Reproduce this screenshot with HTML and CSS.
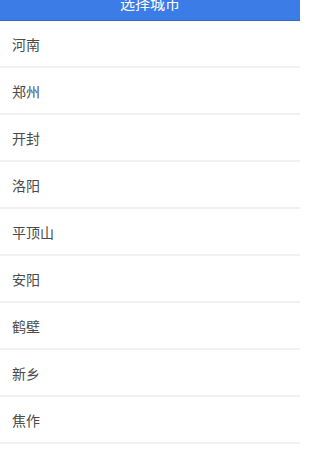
FILE: index.html
```html
<!DOCTYPE html>
<html lang="zh">
<head>
<meta charset="utf-8">
<link rel="stylesheet" href="styles.css">
</head>
<body>
<header class="bar"><h1 class="title">选择城市</h1></header>
<ul class="list">
<li class="row">河南</li>
<li class="row">郑州</li>
<li class="row">开封</li>
<li class="row">洛阳</li>
<li class="row">平顶山</li>
<li class="row">安阳</li>
<li class="row">鹤壁</li>
<li class="row">新乡</li>
<li class="row">焦作</li>
</ul>
</body>
</html>
```
FILE: styles.css
```css
html, body { margin: 0; padding: 0; background: #fff; }
body {
  font-family: "Noto Sans CJK SC", "Noto Sans", sans-serif;
  width: 300px;
  height: 450px;
  overflow: hidden;
}
.bar {
  height: 21px;
  background: #3c7ce6;
  border-bottom: 1px solid #3466c4;
  box-sizing: border-box;
  display: flex;
  align-items: flex-end;
  justify-content: center;
  padding-bottom: 10px;
}
.title {
  margin: 0;
  font-size: 15px;
  line-height: 15px;
  font-weight: normal;
  color: #fff;
}
.list { list-style: none; margin: 0; padding: 0; }
.row {
  height: 47px;
  box-sizing: border-box;
  border-bottom: 2px solid #f1f1f1;
  padding-left: 12px;
  display: flex;
  align-items: center;
  font-size: 14px;
  color: #4a4a4a;
}
```
